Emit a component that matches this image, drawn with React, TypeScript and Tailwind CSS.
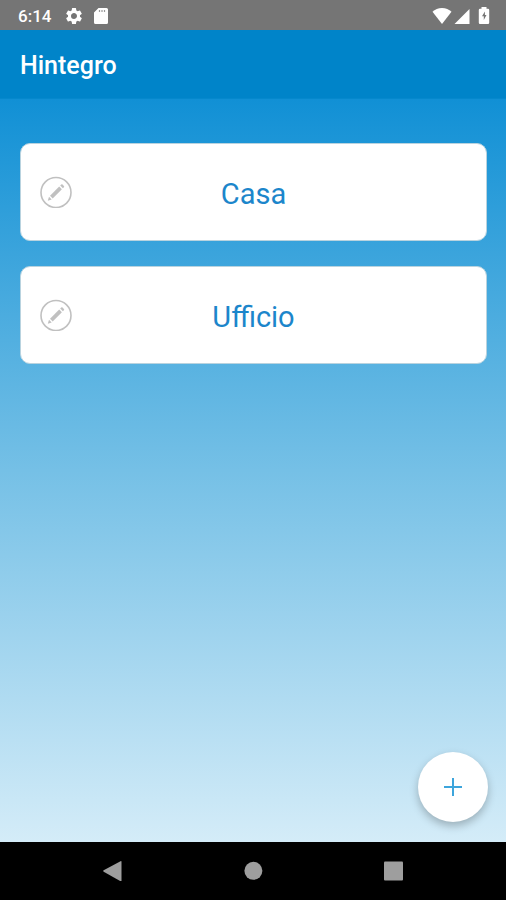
import React from 'react';

interface Place {
    id: string;
    name: string;
}

const PLACES: Place[] = [
    { id: 'casa', name: 'Casa' },
    { id: 'ufficio', name: 'Ufficio' },
];

const StatusBar = () => (
    <div className="h-[30px] shrink-0 flex items-center justify-between bg-[#757575] pt-px pl-[18px] pr-4 text-white">
        <div className="flex items-center">
            <span className="text-[17px] leading-5 font-medium">6:14</span>
            <svg className="ml-[13px] w-5 h-5" viewBox="0 0 24 24" fill="currentColor" aria-hidden="true">
                <path d="M19.14 12.94c.04-.3.06-.61.06-.94 0-.32-.02-.64-.07-.94l2.03-1.58a.49.49 0 0 0 .12-.61l-1.92-3.32a.49.49 0 0 0-.59-.22l-2.39.96c-.5-.38-1.03-.7-1.62-.94l-.36-2.54a.48.48 0 0 0-.48-.41h-3.84a.47.47 0 0 0-.47.41l-.36 2.54c-.59.24-1.13.57-1.62.94l-2.39-.96a.48.48 0 0 0-.59.22L2.74 8.87a.47.47 0 0 0 .12.61l2.03 1.58c-.05.3-.09.63-.09.94s.02.64.07.94l-2.03 1.58a.49.49 0 0 0-.12.61l1.92 3.32c.12.22.37.29.59.22l2.39-.96c.5.38 1.03.7 1.62.94l.36 2.54c.05.24.24.41.48.41h3.84c.24 0 .44-.17.47-.41l.36-2.54c.59-.24 1.13-.56 1.62-.94l2.39.96c.22.08.47 0 .59-.22l1.92-3.32a.47.47 0 0 0-.12-.61l-2.01-1.58zM12 15.6A3.61 3.61 0 0 1 8.4 12c0-1.98 1.62-3.6 3.6-3.6s3.6 1.62 3.6 3.6-1.62 3.6-3.6 3.6z" />
            </svg>
            <svg className="ml-[10px] w-[14px] h-4" viewBox="0 0 14 16" fill="currentColor" aria-hidden="true">
                <path d="M4.500 0h8A1.500 1.500 0 0 1 14 1.500v13a1.500 1.500 0 0 1-1.500 1.500h-11A1.500 1.500 0 0 1 0 14.500V4.500z" />
                <path d="M5.500 2v2M8 2v2M10.500 2v2" stroke="#9a9a9a" strokeWidth="1.200" />
            </svg>
        </div>
        <div className="flex items-center">
            <svg className="w-5 h-4" viewBox="0 0 20 16" fill="currentColor" aria-hidden="true">
                <path d="M10 16 .500 3.800C3 1.500 6.200 0 10 0s7 1.500 9.500 3.800z" />
            </svg>
            <svg className="ml-[2px] w-4 h-4" viewBox="0 0 16 16" fill="currentColor" aria-hidden="true">
                <path d="M.500 16 15.500 1v15z" />
            </svg>
            <svg className="ml-2 w-3 h-[17px]" viewBox="0 0 12 17" fill="currentColor" aria-hidden="true">
                <path d="M3.500 0h5v1.700H10a1.200 1.200 0 0 1 1.200 1.200v12.900A1.200 1.200 0 0 1 10 17H2a1.200 1.200 0 0 1-1.200-1.200V2.900A1.200 1.200 0 0 1 2 1.700h1.500z" />
                <path d="M6.900 4.500 4 9.300h1.800v3.700l2.700-5.100H6.900z" fill="#757575" />
            </svg>
        </div>
    </div>
);

const PlaceCard = ({ place }: { place: Place }) => (
    <li className="relative flex h-[98px] rounded-[10px] border border-[#b9d3df] bg-white">
        <button type="button" className="flex-1 pt-1 text-center text-[29px] leading-9 text-[#1c86cb]">
            {place.name}
        </button>
        {/* Edit sits on top of the card, which is itself tappable */}
        <button
            type="button"
            aria-label={`Modifica ${place.name}`}
            className="absolute inset-y-0 left-[19px] my-auto w-8 h-8 text-[#c0c0c0]"
        >
            <svg className="w-8 h-8" viewBox="0 0 32 32" fill="none" aria-hidden="true">
                <circle cx="16" cy="16.500" r="15" stroke="currentColor" strokeWidth="1.600" />
                <path d="m7.800 24.700 1.200-3.900 2.700 2.700z" fill="currentColor" />
                <path d="m10 19.800 9.200-9.200 2.700 2.700-9.200 9.200z" fill="currentColor" />
                <path d="m20.200 9.600 1-1a1 1 0 0 1 1.400 0l1.300 1.300a1 1 0 0 1 0 1.400l-1 1z" fill="currentColor" />
            </svg>
        </button>
    </li>
);

const NavigationBar = () => (
    <nav className="h-[58px] shrink-0 grid grid-cols-[1fr_20px_1fr] items-center bg-black text-[#9e9e9e]">
        <button type="button" aria-label="Indietro" className="justify-self-end mr-[120px] w-5 h-5">
            <svg className="w-5 h-5" viewBox="0 0 20 20" fill="currentColor" aria-hidden="true">
                <path d="M.7 9.300 17.500.200q1-.4 1 .6v19q0 .8-1 .4L.7 10.700q-1-.7 0-1.400z" />
            </svg>
        </button>
        <button type="button" aria-label="Home" className="w-5 h-5">
            <svg className="w-5 h-5" viewBox="0 0 20 20" fill="currentColor" aria-hidden="true">
                <circle cx="10.400" cy="9.800" r="9" />
            </svg>
        </button>
        <button type="button" aria-label="Recenti" className="ml-[120px] w-5 h-5">
            <svg className="w-5 h-5" viewBox="0 0 20 20" fill="currentColor" aria-hidden="true">
                <rect x="1" y=".5" width="19" height="19" rx="1" />
            </svg>
        </button>
    </nav>
);

const App: React.FC = () => {
    return (
        <div className="min-h-screen flex flex-col font-[Roboto,sans-serif]">
            <StatusBar />

            <header className="h-[69px] shrink-0 flex items-center bg-[#0084c9] px-5 pt-1 border-b border-[#0688cc]">
                <h1 className="text-[25px] leading-8 font-medium text-white">Hintegro</h1>
            </header>

            <main className="relative flex-1 px-5 pt-11 pr-[19px] bg-linear-to-b/srgb from-[#1190d5] via-[#75c0e6] to-[#d4ecf8]">
                <ul className="flex flex-col gap-[25px]">
                    {PLACES.map((place) => (
                        <PlaceCard key={place.id} place={place} />
                    ))}
                </ul>

                <button
                    type="button"
                    aria-label="Aggiungi"
                    className="absolute right-[18px] bottom-5 w-[70px] h-[70px] flex items-center justify-center rounded-full bg-white text-[#3da5dc] shadow-[0_4px_8px_rgba(0,0,0,0.25)]"
                >
                    <svg className="w-[18px] h-[18px]" viewBox="0 0 18 18" stroke="currentColor" strokeWidth="2" aria-hidden="true">
                        <path d="M9 0v18M0 9h18" />
                    </svg>
                </button>
            </main>

            <NavigationBar />
        </div>
    );
};

export default App;
